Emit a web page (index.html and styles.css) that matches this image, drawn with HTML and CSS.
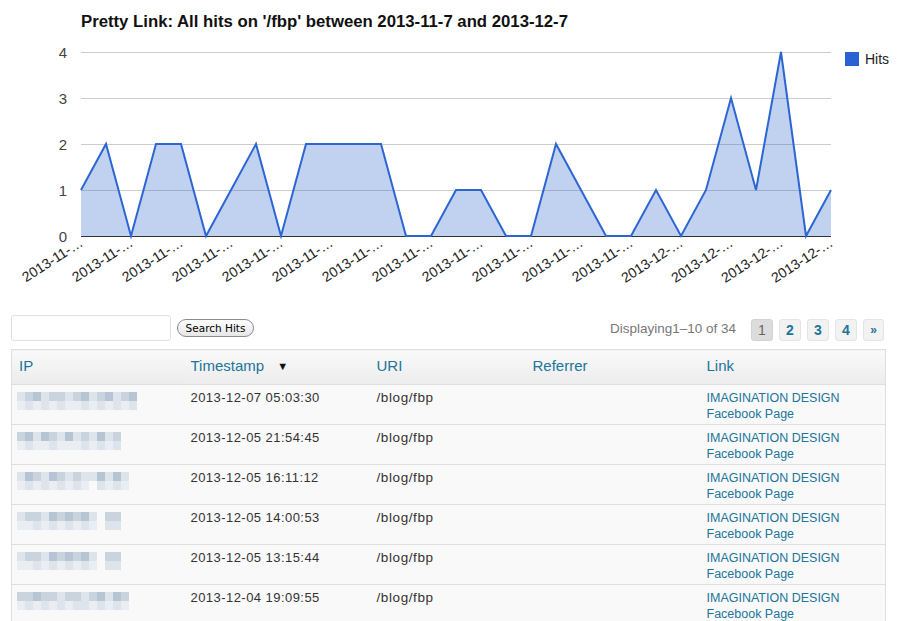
FILE: index.html
```html
<!DOCTYPE html>
<html>
<head>
<meta charset="utf-8">
<link rel="stylesheet" href="styles.css">
</head>
<body>
<div class="page">
  <svg class="chart" width="900" height="315" viewBox="0 0 900 315" xmlns="http://www.w3.org/2000/svg">
    <text class="chart-title" x="81" y="27" textLength="487" lengthAdjust="spacingAndGlyphs">Pretty Link: All hits on '/fbp' between 2013-11-7 and 2013-12-7</text>
    <g class="grid">
      <line x1="81" y1="52.5" x2="831" y2="52.5"/>
      <line x1="81" y1="98.5" x2="831" y2="98.5"/>
      <line x1="81" y1="144.5" x2="831" y2="144.5"/>
      <line x1="81" y1="190.5" x2="831" y2="190.5"/>
    </g>
    <polygon class="area" points="81,190 106,144 131,236 156,144 181,144 206,236 231,190 256,144 281,236 306,144 331,144 356,144 381,144 406,236 431,236 456,190 481,190 506,236 531,236 556,144 581,190 606,236 631,236 656,190 681,236 706,190 731,98 756,190 781,52 806,236 831,190 831,236 81,236"/>
    <line class="base" x1="81" y1="236.5" x2="831" y2="236.5"/>
    <polyline class="line" points="81,190 106,144 131,236 156,144 181,144 206,236 231,190 256,144 281,236 306,144 331,144 356,144 381,144 406,236 431,236 456,190 481,190 506,236 531,236 556,144 581,190 606,236 631,236 656,190 681,236 706,190 731,98 756,190 781,52 806,236 831,190"/>
    <g class="ylab">
      <text x="67" y="58">4</text>
      <text x="67" y="104">3</text>
      <text x="67" y="150">2</text>
      <text x="67" y="196">1</text>
      <text x="67" y="242">0</text>
    </g>
    <g class="xlab">
      <text transform="translate(84 245) rotate(-33)">2013-11-…</text>
      <text transform="translate(134 245) rotate(-33)">2013-11-…</text>
      <text transform="translate(184 245) rotate(-33)">2013-11-…</text>
      <text transform="translate(234 245) rotate(-33)">2013-11-…</text>
      <text transform="translate(284 245) rotate(-33)">2013-11-…</text>
      <text transform="translate(334 245) rotate(-33)">2013-11-…</text>
      <text transform="translate(384 245) rotate(-33)">2013-11-…</text>
      <text transform="translate(434 245) rotate(-33)">2013-11-…</text>
      <text transform="translate(484 245) rotate(-33)">2013-11-…</text>
      <text transform="translate(534 245) rotate(-33)">2013-11-…</text>
      <text transform="translate(584 245) rotate(-33)">2013-11-…</text>
      <text transform="translate(634 245) rotate(-33)">2013-11-…</text>
      <text transform="translate(684 245) rotate(-33)">2013-12-…</text>
      <text transform="translate(734 245) rotate(-33)">2013-12-…</text>
      <text transform="translate(784 245) rotate(-33)">2013-12-…</text>
      <text transform="translate(834 245) rotate(-33)">2013-12-…</text>
    </g>
    <rect class="legend-key" x="845" y="52" width="14" height="14"/>
    <text class="legend-text" x="865" y="64">Hits</text>
  </svg>

  <div class="controls">
    <div class="search">
      <input class="search-input" type="text">
      <button class="search-btn">Search Hits</button>
    </div>
    <div class="paging">
      <span class="displaying">Displaying1–10 of 34</span>
      <span class="pg current">1</span>
      <span class="pg">2</span>
      <span class="pg">3</span>
      <span class="pg">4</span>
      <span class="pg raquo">»</span>
    </div>
  </div>

  <table class="hits">
    <colgroup>
      <col class="c-ip"><col class="c-ts"><col class="c-uri"><col class="c-ref"><col class="c-link">
    </colgroup>
    <thead>
      <tr>
        <th>IP</th>
        <th>Timestamp <span class="sort">▼</span></th>
        <th>URI</th>
        <th>Referrer</th>
        <th>Link</th>
      </tr>
    </thead>
    <tbody>
      <tr>
        <td><div class="ip">
          <i class="c"></i><i class="b"></i><i class="a"></i><i class="c"></i><i class="b"></i><i class="b"></i><i class="c"></i><i class="b"></i><i class="a"></i><i class="c"></i><i class="b"></i><i class="a"></i><i class="c"></i><i class="b"></i><i class="a"></i>
          <i class="d"></i><i class="c"></i><i class="d"></i><i class="c"></i><i class="d"></i><i class="c"></i><i class="d"></i><i class="d"></i><i class="c"></i><i class="d"></i><i class="c"></i><i class="d"></i><i class="c"></i><i class="d"></i><i class="c"></i>
        </div></td>
        <td class="ts">2013-12-07 05:03:30</td>
        <td class="uri">/blog/fbp</td>
        <td></td>
        <td class="link"><a>IMAGINATION DESIGN<br>Facebook Page</a></td>
      </tr>
      <tr>
        <td><div class="ip">
          <i class="b"></i><i class="a"></i><i class="c"></i><i class="a"></i><i class="b"></i><i class="c"></i><i class="a"></i><i class="c"></i><i class="b"></i><i class="c"></i><i class="a"></i><i class="c"></i><i class="b"></i><i class="e"></i><i class="e"></i>
          <i class="d"></i><i class="c"></i><i class="d"></i><i class="d"></i><i class="c"></i><i class="d"></i><i class="d"></i><i class="d"></i><i class="c"></i><i class="d"></i><i class="c"></i><i class="d"></i><i class="c"></i><i class="e"></i><i class="e"></i>
        </div></td>
        <td class="ts">2013-12-05 21:54:45</td>
        <td class="uri">/blog/fbp</td>
        <td></td>
        <td class="link"><a>IMAGINATION DESIGN<br>Facebook Page</a></td>
      </tr>
      <tr>
        <td><div class="ip">
          <i class="c"></i><i class="a"></i><i class="b"></i><i class="c"></i><i class="a"></i><i class="b"></i><i class="c"></i><i class="b"></i><i class="c"></i><i class="c"></i><i class="a"></i><i class="c"></i><i class="a"></i><i class="c"></i><i class="e"></i>
          <i class="d"></i><i class="c"></i><i class="d"></i><i class="c"></i><i class="d"></i><i class="c"></i><i class="d"></i><i class="c"></i><i class="d"></i><i class="e"></i><i class="c"></i><i class="d"></i><i class="c"></i><i class="d"></i><i class="e"></i>
        </div></td>
        <td class="ts">2013-12-05 16:11:12</td>
        <td class="uri">/blog/fbp</td>
        <td></td>
        <td class="link"><a>IMAGINATION DESIGN<br>Facebook Page</a></td>
      </tr>
      <tr>
        <td><div class="ip">
          <i class="c"></i><i class="b"></i><i class="b"></i><i class="c"></i><i class="a"></i><i class="b"></i><i class="a"></i><i class="b"></i><i class="a"></i><i class="c"></i><i class="e"></i><i class="b"></i><i class="b"></i><i class="e"></i><i class="e"></i>
          <i class="d"></i><i class="d"></i><i class="c"></i><i class="d"></i><i class="c"></i><i class="d"></i><i class="c"></i><i class="d"></i><i class="c"></i><i class="d"></i><i class="e"></i><i class="c"></i><i class="c"></i><i class="e"></i><i class="e"></i>
        </div></td>
        <td class="ts">2013-12-05 14:00:53</td>
        <td class="uri">/blog/fbp</td>
        <td></td>
        <td class="link"><a>IMAGINATION DESIGN<br>Facebook Page</a></td>
      </tr>
      <tr>
        <td><div class="ip">
          <i class="c"></i><i class="b"></i><i class="b"></i><i class="c"></i><i class="a"></i><i class="b"></i><i class="a"></i><i class="b"></i><i class="a"></i><i class="c"></i><i class="e"></i><i class="b"></i><i class="b"></i><i class="e"></i><i class="e"></i>
          <i class="d"></i><i class="d"></i><i class="c"></i><i class="d"></i><i class="c"></i><i class="d"></i><i class="c"></i><i class="d"></i><i class="c"></i><i class="d"></i><i class="e"></i><i class="c"></i><i class="c"></i><i class="e"></i><i class="e"></i>
        </div></td>
        <td class="ts">2013-12-05 13:15:44</td>
        <td class="uri">/blog/fbp</td>
        <td></td>
        <td class="link"><a>IMAGINATION DESIGN<br>Facebook Page</a></td>
      </tr>
      <tr>
        <td><div class="ip">
          <i class="b"></i><i class="b"></i><i class="a"></i><i class="b"></i><i class="b"></i><i class="c"></i><i class="b"></i><i class="b"></i><i class="c"></i><i class="b"></i><i class="a"></i><i class="c"></i><i class="a"></i><i class="b"></i><i class="e"></i>
          <i class="d"></i><i class="c"></i><i class="d"></i><i class="c"></i><i class="d"></i><i class="c"></i><i class="d"></i><i class="c"></i><i class="c"></i><i class="d"></i><i class="c"></i><i class="d"></i><i class="c"></i><i class="d"></i><i class="e"></i>
        </div></td>
        <td class="ts">2013-12-04 19:09:55</td>
        <td class="uri">/blog/fbp</td>
        <td></td>
        <td class="link"><a>IMAGINATION DESIGN<br>Facebook Page</a></td>
      </tr>
    </tbody>
  </table>
</div>
</body>
</html>
```
FILE: styles.css
```css
html, body {
  margin: 0;
  padding: 0;
  background: #fff;
  font-family: "Liberation Sans", Arial, sans-serif;
  overflow: hidden;
}

.page {
  width: 900px;
}

.chart {
  display: block;
  font-family: "Liberation Sans", Arial, sans-serif;
}

.chart-title {
  font-size: 16px;
  font-weight: bold;
  fill: #111;
}

.grid line {
  stroke: #cccccc;
  stroke-width: 1;
}

.area {
  fill: #3366cc;
  fill-opacity: 0.3;
}

.base {
  stroke: #333;
  stroke-width: 1;
}

.line {
  fill: none;
  stroke: #2c66d2;
  stroke-width: 2;
  stroke-linejoin: miter;
}

.ylab text {
  font-size: 15px;
  fill: #444;
  text-anchor: end;
}

.xlab text {
  font-size: 14px;
  fill: #222;
  text-anchor: end;
}

.legend-key {
  fill: #2a62d4;
}

.legend-text {
  font-size: 14px;
  fill: #222;
}

.controls {
  display: flex;
  justify-content: space-between;
  align-items: flex-start;
  height: 34px;
  padding: 0 16px 0 11px;
}

.search {
  display: flex;
  align-items: flex-start;
}

.search-input {
  box-sizing: border-box;
  width: 160px;
  height: 26px;
  margin: 0;
  border: 1px solid #dfdfdf;
  border-radius: 3px;
  background: #fff;
  padding: 0 4px;
}

.search-btn {
  box-sizing: border-box;
  margin: 4px 0 0 6px;
  width: 77px;
  height: 18px;
  padding: 0;
  border: 1px solid #8c8c8c;
  border-radius: 9px;
  background: linear-gradient(#ffffff, #e6e6e6);
  font-family: "DejaVu Sans", "Liberation Sans", sans-serif;
  font-size: 10.5px;
  color: #000;
  line-height: 16px;
}

.paging {
  display: flex;
  align-items: flex-start;
  gap: 6px;
}

.displaying {
  margin: 6px 9px 0 0;
  font-size: 13.5px;
  color: #777;
  line-height: 16px;
}

.pg {
  box-sizing: border-box;
  margin-top: 4px;
  width: 22px;
  height: 22px;
  border: 1px solid #e4e4e4;
  border-radius: 3px;
  background: #f2f2f2;
  color: #21759b;
  font-weight: bold;
  font-size: 14px;
  line-height: 20px;
  text-align: center;
}

.pg.current {
  background: #dcdcdc;
  border-color: #d2d2d2;
  color: #666;
  font-weight: normal;
}

.pg.raquo {
  width: 21px;
  font-size: 12px;
}

.hits {
  margin-left: 11px;
  width: 874px;
  border-collapse: collapse;
  table-layout: fixed;
  border: 1px solid #dfdfdf;
  background: #f9f9f9;
}

.c-ip { width: 172px; }
.c-ts { width: 186px; }
.c-uri { width: 156px; }
.c-ref { width: 174px; }
.c-link { width: 186px; }

.hits th {
  box-sizing: border-box;
  height: 35px;
  padding: 0 7px 3px 7px;
  text-align: left;
  font-weight: normal;
  font-size: 15px;
  color: #21759b;
  background: linear-gradient(#f9f9f9, #ececec);
  border-bottom: 1px solid #dfdfdf;
  vertical-align: middle;
}

.sort {
  margin-left: 9px;
  font-size: 11px;
  color: #111;
  position: relative;
  top: -1px;
}

.hits td {
  height: 40px;
  box-sizing: border-box;
  padding: 5px 7px 0 7px;
  vertical-align: top;
  border-bottom: 1px solid #dfdfdf;
  font-size: 12.5px;
  line-height: 16px;
  color: #333;
}

.hits td.ts {
  font-size: 13px;
  letter-spacing: 0.45px;
}

.hits td.uri {
  font-size: 13.5px;
  letter-spacing: 0.6px;
}

.hits td.link a {
  color: #21759b;
  text-decoration: none;
}

.ip {
  display: grid;
  grid-template-columns: repeat(15, 8px);
  grid-auto-rows: 9px;
  margin: 2px 0 0 -2px;
}

.ip i { display: block; }
.ip .a { background: #b6c4d3; }
.ip .b { background: #cad4df; }
.ip .c { background: #dde4eb; }
.ip .d { background: #eaeef2; }
.ip .e { background: transparent; }
```
